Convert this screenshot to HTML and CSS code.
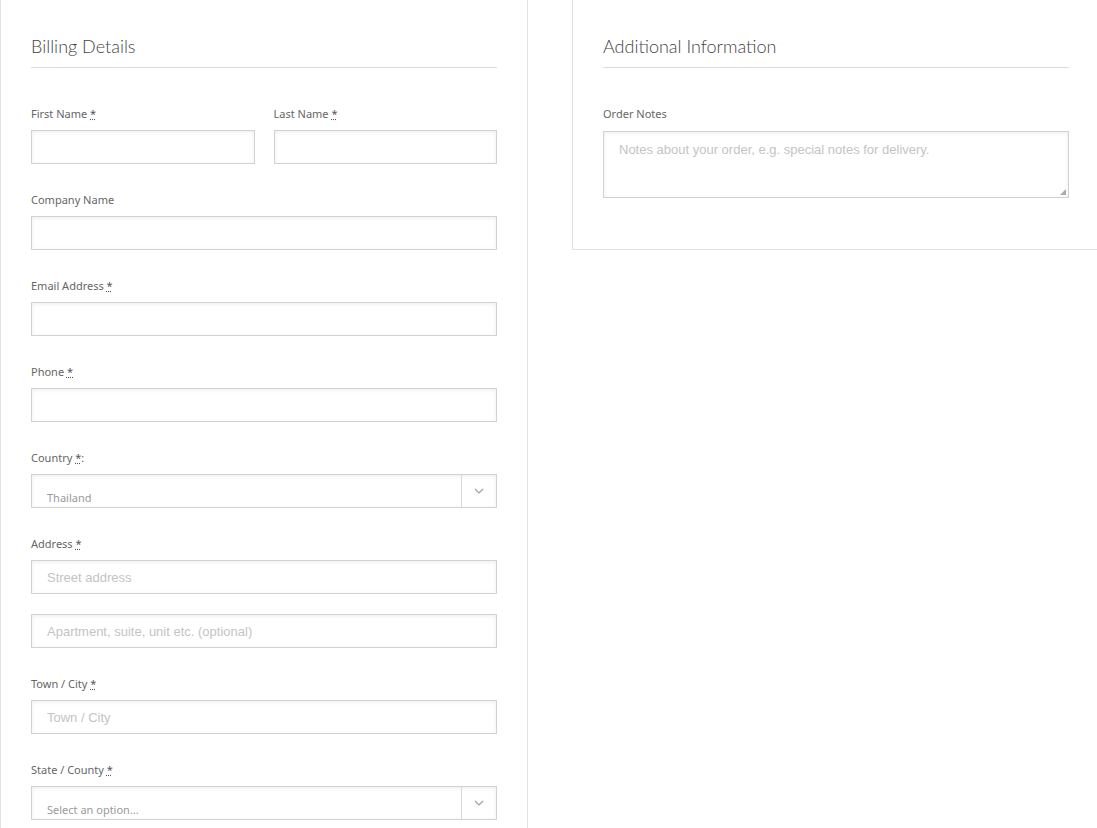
FILE: index.html
```html
<!DOCTYPE html>
<html lang="en">
<head>
    <meta charset="UTF-8">
    <title>Checkout</title>
    <link rel="stylesheet" href="styles.css">
</head>
<body>
    <div class="checkout">
        <div class="panel billing">
            <h3>Billing Details</h3>

            <div class="row two">
                <div class="field">
                    <label>First Name <abbr title="required">*</abbr></label>
                    <input type="text">
                </div>
                <div class="field">
                    <label>Last Name <abbr title="required">*</abbr></label>
                    <input type="text">
                </div>
            </div>

            <div class="field">
                <label>Company Name</label>
                <input type="text">
            </div>

            <div class="field">
                <label>Email Address <abbr title="required">*</abbr></label>
                <input type="email">
            </div>

            <div class="field">
                <label>Phone <abbr title="required">*</abbr></label>
                <input type="tel">
            </div>

            <div class="field">
                <label>Country <abbr title="required">*</abbr>:</label>
                <div class="select">
                    <span class="select-value">Thailand</span>
                    <span class="select-arrow">
                        <svg width="10" height="6" viewBox="0 0 10 6"><polyline points="1,1 5,5 9,1" fill="none" stroke="#9aa0b4" stroke-width="1.2"/></svg>
                    </span>
                </div>
            </div>

            <div class="field">
                <label>Address <abbr title="required">*</abbr></label>
                <input type="text" placeholder="Street address">
                <input type="text" class="second" placeholder="Apartment, suite, unit etc. (optional)">
            </div>

            <div class="field">
                <label>Town / City <abbr title="required">*</abbr></label>
                <input type="text" placeholder="Town / City">
            </div>

            <div class="field">
                <label>State / County <abbr title="required">*</abbr></label>
                <div class="select">
                    <span class="select-value">Select an option…</span>
                    <span class="select-arrow">
                        <svg width="10" height="6" viewBox="0 0 10 6"><polyline points="1,1 5,5 9,1" fill="none" stroke="#9aa0b4" stroke-width="1.2"/></svg>
                    </span>
                </div>
            </div>
        </div>

        <div class="panel additional">
            <h3>Additional Information</h3>
            <div class="field">
                <label>Order Notes</label>
                <div class="notes">
                    <textarea placeholder="Notes about your order, e.g. special notes for delivery."></textarea>
                    <span class="grip"></span>
                </div>
            </div>
        </div>
    </div>
</body>
</html>
```

FILE: styles.css
```css
body {
    margin: 0;
    background: #fff;
    font-family: 'Noto Sans', 'Liberation Sans', sans-serif;
    color: #555;
}

.checkout {
    display: flex;
    align-items: flex-start;
    gap: 44px;
}

.panel {
    box-sizing: border-box;
    padding: 34px 28px 51px 30px;
}

.billing {
    width: 528px;
    border-left: 1px solid #e2e2e2;
    border-right: 1px solid #e2e2e2;
    padding-right: 30px;
    padding-bottom: 40px;
}

.additional {
    flex: 1;
    border-left: 1px solid #e2e2e2;
    border-bottom: 1px solid #e2e2e2;
}

.additional .field {
    margin-bottom: 0;
}

h3 {
    margin: 0 0 38px;
    padding-bottom: 9px;
    border-bottom: 1px solid #dedede;
    font-family: 'Lato', 'Noto Sans', sans-serif;
    font-weight: 300;
    font-size: 18px;
    line-height: 24px;
    color: #444;
}

.field {
    margin-bottom: 28px;
}

.row.two {
    display: flex;
    gap: 19px;
}

.row.two .field {
    flex: 1;
}

label {
    display: block;
    font-size: 11px;
    line-height: 16px;
    color: #666;
    margin-bottom: 8px;
}

abbr {
    color: #555;
    text-decoration: underline dotted;
    cursor: help;
}

input,
.select,
textarea {
    display: block;
    box-sizing: border-box;
    width: 100%;
    height: 34px;
    margin: 0;
    padding: 0 15px;
    border: 1px solid #d2d2d2;
    border-radius: 0;
    background: #fff;
    box-shadow: inset 0 1px 4px rgba(0, 0, 0, 0.07);
    font-family: 'Liberation Sans', Arial, sans-serif;
    font-size: 13px;
    color: #555;
    outline: none;
}

input.second {
    margin-top: 20px;
}

input::placeholder,
textarea::placeholder {
    color: #c4c4c4;
}

.select {
    display: flex;
    padding: 0;
}

.select-value {
    flex: 1;
    align-self: flex-end;
    padding: 0 0 1px 15px;
    font-family: 'Noto Sans', sans-serif;
    font-size: 11px;
    line-height: 16px;
    color: #9a9a9a;
}

.select-arrow {
    width: 34px;
    border-left: 1px solid #d8d8d8;
    display: flex;
    align-items: center;
    justify-content: center;
}

.notes {
    position: relative;
    padding-top: 1px;
}

textarea {
    height: 67px;
    padding: 10px 15px;
    resize: none;
}

.grip {
    position: absolute;
    right: 3px;
    bottom: 3px;
    width: 6px;
    height: 6px;
    background:
        radial-gradient(circle, #aaa 0.8px, transparent 1px) 0 0 / 2px 2px;
    clip-path: polygon(100% 0, 100% 100%, 0 100%);
}
```
